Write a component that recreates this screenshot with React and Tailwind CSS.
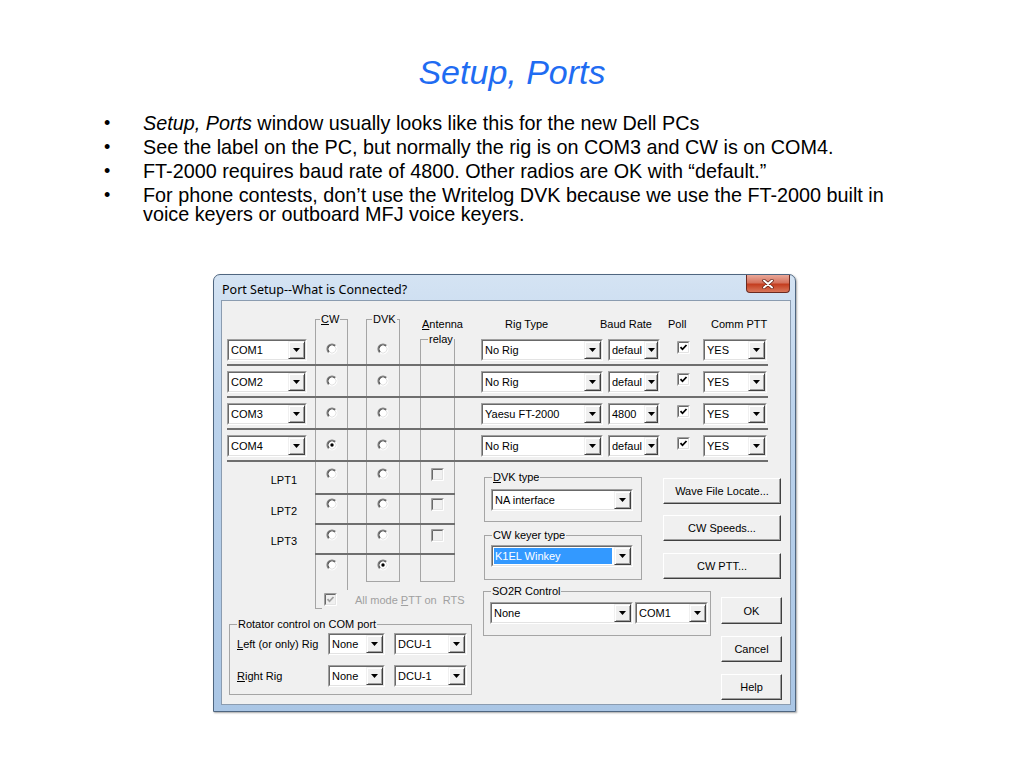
import React from 'react';

const LINE = "border-[#a5a5a5]";

const Radio = ({ on }) => (
    <svg width="12" height="12" viewBox="0 0 12 12" className="block">
        <circle cx="6" cy="6" r="5" fill="#fff" />
        <path d="M9.54 2.46A5 5 0 0 1 2.46 9.54" fill="none" stroke="#fff" />
        <path d="M8.83 3.17A4 4 0 0 1 3.17 8.83" fill="none" stroke="#e3e3e3" />
        <path d="M2.46 9.54A5 5 0 0 1 9.54 2.46" fill="none" stroke="#7c7c7c" strokeWidth="1.1" />
        <path d="M3.17 8.83A4 4 0 0 1 8.83 3.17" fill="none" stroke="#3c3c3c" strokeWidth="1.1" />
        {on && <circle cx="6" cy="6" r="1.7" fill="#000" />}
    </svg>
);

const Check = ({ on, disabled }) => (
    <svg width="13" height="13" viewBox="0 0 13 13" className="block">
        <rect x="1" y="1" width="11" height="11" fill={disabled ? "#f0f0f0" : "#fff"} />
        <path d="M0.5 12.5H12.5V0.5" fill="none" stroke="#fff" />
        <path d="M1.5 11.5H11.5V1.5" fill="none" stroke="#e3e3e3" />
        <path d="M0.5 12.5V0.5H12.5" fill="none" stroke="#a0a0a0" />
        <path d="M1.5 11.5V1.5H11.5" fill="none" stroke="#696969" />
        {on && <path d="M3.5 6.2L5.5 8.3L9.5 4" fill="none" stroke={disabled ? "#a0a0a0" : "#000"} strokeWidth="1.8" />}
    </svg>
);

const Combo = ({ w, value, sel, bw = "w-[17px]" }) => (
    <div className={`${w} h-[22px] shrink-0 border border-t-[#a0a0a0] border-l-[#a0a0a0] border-r-white border-b-white`}>
        <div className="h-full flex bg-white border border-t-[#696969] border-l-[#696969] border-r-[#e3e3e3] border-b-[#e3e3e3]">
            <div className="flex-1 min-w-0 flex items-center pl-[1px] pr-[2px] py-[1px]">
                {sel ? (
                    <span className="w-full h-full flex items-center bg-[#3399ff] text-white pl-[1px]">{value}</span>
                ) : (
                    <span className="pl-[1px] whitespace-nowrap">{value}</span>
                )}
            </div>
            <div className={`${bw} shrink-0 h-full flex items-center justify-center bg-[#f0f0f0] border border-t-[#f0f0f0] border-l-[#f0f0f0] border-r-[#404040] border-b-[#404040] shadow-[inset_1px_1px_0_#fff,inset_-1px_-1px_0_#a0a0a0]`}>
                <svg width="7" height="4" viewBox="0 0 7 4" className="block">
                    <path d="M0 0H7L3.5 4Z" fill="#000" />
                </svg>
            </div>
        </div>
    </div>
);

const Btn = ({ className = "", children }) => (
    <button className={`${className} shrink-0 flex items-center justify-center bg-[#f0f0f0] border border-t-white border-l-white border-r-[#404040] border-b-[#404040] shadow-[inset_-1px_-1px_0_#a0a0a0] text-[11px] leading-[12px] text-black`}>
        {children}
    </button>
);

const Group = ({ title, className = "", children }) => (
    <fieldset className={`${className} shrink-0 border ${LINE}`}>
        <legend className="ml-[7px] px-[1px] leading-[12px]">{title}</legend>
        {children}
    </fieldset>
);

const ComRow = ({ port, cw, rig, baud, first }) => (
    <div className="flex h-[32px] w-[541px] border-b-2 border-[#6e6e6e]">
        <div className="w-[88px] shrink-0 pt-[5px]"><Combo w="w-[80px]" value={port} /></div>
        <div className={`w-[33px] shrink-0 border-x ${LINE} flex justify-center pt-[9px]`}><Radio on={cw} /></div>
        <div className={`ml-[18px] w-[34px] shrink-0 border-x ${LINE} flex justify-center pt-[9px]`}><Radio /></div>
        {first ? (
            <fieldset className={`ml-[20px] w-[35px] shrink-0 h-full border border-b-0 ${LINE}`}>
                <legend className="ml-[7px] px-[1px] leading-[11px]">relay</legend>
            </fieldset>
        ) : (
            <div className={`ml-[20px] w-[35px] shrink-0 border-x ${LINE}`} />
        )}
        <div className="ml-[26px] w-[122px] shrink-0 pt-[5px]"><Combo w="w-[122px]" value={rig} /></div>
        <div className="ml-[5px] w-[52px] shrink-0 pt-[5px]"><Combo w="w-[52px]" value={baud} bw="w-[14px]" /></div>
        <div className="w-[43px] shrink-0 pl-[17px] pt-[7px]"><Check on /></div>
        <div className="w-[64px] shrink-0 pt-[5px]"><Combo w="w-[64px]" value="YES" /></div>
    </div>
);

const LptRow = ({ label, h, lpt, rpt }) => (
    <div className={`flex ${h}`}>
        <div className={`w-[88px] shrink-0 text-right pr-[18px] ${lpt}`}>{label}</div>
        <div className="flex w-[140px] shrink-0 border-b-2 border-[#6e6e6e]">
            <div className={`w-[33px] shrink-0 border-x ${LINE} flex justify-center ${rpt}`}><Radio /></div>
            <div className={`ml-[18px] w-[34px] shrink-0 border-x ${LINE} flex justify-center ${rpt}`}><Radio /></div>
            <div className={`ml-[20px] w-[35px] shrink-0 border-x ${LINE} flex justify-center ${rpt}`}><Check disabled /></div>
        </div>
    </div>
);

const bullets = [
    <><i>Setup, Ports</i> window usually looks like this for the new Dell PCs</>,
    <>See the label on the PC, but normally the rig is on COM3 and CW is on COM4.</>,
    <>FT-2000 requires baud rate of 4800. Other radios are OK with “default.”</>,
    <>For phone contests, don’t use the Writelog DVK because we use the FT-2000 built in voice keyers or outboard MFJ voice keyers.</>,
];

export default function App() {
    return (
        <div className="w-[1024px] h-[768px] bg-white overflow-hidden font-['Liberation_Sans',Arial,sans-serif] text-black">
            <h1 className="pt-[52px] text-center text-[34px] leading-[40px] italic text-[#1f6cf2]">Setup, Ports</h1>

            <ul className="mt-[22px] ml-[104px] flex flex-col gap-[5px] text-[19.8px] leading-[19px]">
                {bullets.map((b, i) => (
                    <li key={i} className="flex">
                        <span className="w-[39px] shrink-0 text-[18px]">•</span>
                        <span className="w-[790px]">{b}</span>
                    </li>
                ))}
            </ul>

            {/* dialog window */}
            <div className="ml-[213px] mt-[50px] w-[583px] h-[438px] rounded-t-[7px] border border-[#4f6680] bg-[linear-gradient(180deg,#d4e3f3_0%,#bcd3ec_30%,#aac6e5_100%)] flex flex-col shadow-[1px_1px_2px_rgba(0,0,0,0.35)]">
                <div className="h-[25px] shrink-0 flex items-start justify-between">
                    <span className="pl-[8px] pt-[8px] text-[12.5px] leading-[14px] font-['Noto_Sans',sans-serif]">Port Setup--What is Connected?</span>
                    <div className="mr-[5px] w-[44px] h-[18px] rounded-b-[4px] border border-t-0 border-[#6b2a20] bg-[linear-gradient(180deg,#eaa899_0%,#d5735e_45%,#c43e20_55%,#d9775b_100%)] flex items-center justify-center">
                        <svg width="12" height="10" viewBox="0 0 12 10" className="block">
                            <path d="M2 1.5L10 8.5M10 1.5L2 8.5" stroke="#5a1a10" strokeWidth="3.4" strokeLinecap="round" />
                            <path d="M2 1.5L10 8.5M10 1.5L2 8.5" stroke="#fff" strokeWidth="2" strokeLinecap="round" />
                        </svg>
                    </div>
                </div>

                <div className="ml-[7px] mr-[4px] h-[405px] shrink-0 border border-[#8b9cb0] bg-[#f0f0f0] pl-[5px] text-[11px] leading-[12px]">
                    {/* column headers */}
                    <div className="flex h-[33px]">
                        <div className="w-[88px] shrink-0" />
                        <fieldset className={`mt-[12px] w-[33px] h-[21px] shrink-0 border border-b-0 ${LINE}`}>
                            <legend className="ml-[4px] px-[1px] leading-[12px]"><u>C</u>W</legend>
                        </fieldset>
                        <fieldset className={`ml-[18px] mt-[12px] w-[34px] h-[21px] shrink-0 border border-b-0 ${LINE}`}>
                            <legend className="ml-[5px] px-[1px] leading-[12px]">DVK</legend>
                        </fieldset>
                        <div className="ml-[20px] w-[35px] shrink-0 pt-[17px] pl-[2px] whitespace-nowrap"><u>A</u>ntenna</div>
                        <div className="w-[145px] shrink-0 pt-[17px] pl-[50px]">Rig Type</div>
                        <div className="w-[68px] shrink-0 pt-[17px]">Baud Rate</div>
                        <div className="w-[43px] shrink-0 pt-[17px]">Poll</div>
                        <div className="shrink-0 pt-[17px] whitespace-nowrap">Comm PTT</div>
                    </div>

                    <ComRow port="COM1" rig="No Rig" baud="defaul" first />
                    <ComRow port="COM2" rig="No Rig" baud="defaul" />
                    <ComRow port="COM3" rig="Yaesu FT-2000" baud="4800" />
                    <ComRow port="COM4" rig="No Rig" baud="defaul" cw />

                    <div className="flex">
                        {/* left column */}
                        <div className="w-[248px] shrink-0 flex flex-col">
                            <LptRow label="LPT1" h="h-[33px]" lpt="pt-[12px]" rpt="pt-[6px]" />
                            <LptRow label="LPT2" h="h-[30px]" lpt="pt-[10px]" rpt="pt-[3px]" />
                            <LptRow label="LPT3" h="h-[30px]" lpt="pt-[10px]" rpt="pt-[4px]" />
                            <div className="flex h-[35px] items-start">
                                <div className="w-[88px] shrink-0" />
                                <div className={`w-[33px] h-full shrink-0 border-x ${LINE} flex justify-center pt-[4px]`}><Radio /></div>
                                <div className={`ml-[18px] w-[34px] h-[27px] shrink-0 border-x border-b ${LINE} flex justify-center pt-[4px]`}><Radio on /></div>
                                <div className={`ml-[20px] w-[35px] h-[27px] shrink-0 border-x border-b ${LINE}`} />
                            </div>
                            <div className="flex h-[19px] items-center">
                                <div className={`ml-[88px] w-[7px] h-full shrink-0 border-l border-b ${LINE}`} />
                                <div className="ml-[2px] shrink-0"><Check on disabled /></div>
                                <span className="ml-[18px] whitespace-nowrap text-[#a0a0a0]">All mode <u>P</u>TT on&nbsp; RTS</span>
                            </div>
                            <Group title="Rotator control on COM port" className="ml-[2px] mt-[9px] w-[243px] h-[77px]">
                                <div className="flex items-center mt-[3px]">
                                    <span className="w-[98px] shrink-0 pl-[7px] whitespace-nowrap"><u>L</u>eft (or only) Rig</span>
                                    <Combo w="w-[57px]" value="None" />
                                    <div className="w-[9px] shrink-0" />
                                    <Combo w="w-[73px]" value="DCU-1" />
                                </div>
                                <div className="flex items-center mt-[10px]">
                                    <span className="w-[98px] shrink-0 pl-[7px] whitespace-nowrap"><u>R</u>ight Rig</span>
                                    <Combo w="w-[57px]" value="None" />
                                    <div className="w-[9px] shrink-0" />
                                    <Combo w="w-[73px]" value="DCU-1" />
                                </div>
                            </Group>
                        </div>

                        {/* right area */}
                        <div className="ml-[8px] w-[299px] shrink-0 flex flex-col">
                            <div className="flex items-start">
                                <div className="ml-[1px] mt-[9px] w-[158px] shrink-0 flex flex-col">
                                    <Group title={<><u>D</u>VK type</>} className="w-[158px] h-[51px]">
                                        <div className="mt-[6px] ml-[6px]"><Combo w="w-[142px]" value="NA interface" /></div>
                                    </Group>
                                    <Group title="CW keyer type" className="mt-[7px] w-[158px] h-[51px]">
                                        <div className="mt-[4px] ml-[6px]"><Combo w="w-[142px]" value="K1EL Winkey" sel /></div>
                                    </Group>
                                </div>
                                <div className="ml-[21px] mt-[16px] w-[118px] shrink-0 flex flex-col">
                                    <Btn className="w-[118px] h-[26px]">Wave File Locate...</Btn>
                                    <Btn className="mt-[11px] w-[118px] h-[26px]">CW Speeds...</Btn>
                                    <Btn className="mt-[12px] w-[118px] h-[26px]">CW PTT...</Btn>
                                </div>
                            </div>
                            <div className="flex items-start mt-[5px]">
                                <Group title="SO2R Control" className="w-[228px] h-[51px]">
                                    <div className="mt-[5px] ml-[6px] flex">
                                        <Combo w="w-[143px]" value="None" />
                                        <div className="w-[2px] shrink-0" />
                                        <Combo w="w-[73px]" value="COM1" />
                                    </div>
                                </Group>
                                <Btn className="ml-[10px] mt-[12px] w-[61px] h-[27px]">OK</Btn>
                            </div>
                            <Btn className="self-end w-[61px] h-[26px]">Cancel</Btn>
                            <Btn className="self-end mt-[12px] w-[61px] h-[26px]">Help</Btn>
                        </div>
                    </div>
                </div>
            </div>
        </div>
    );
}
